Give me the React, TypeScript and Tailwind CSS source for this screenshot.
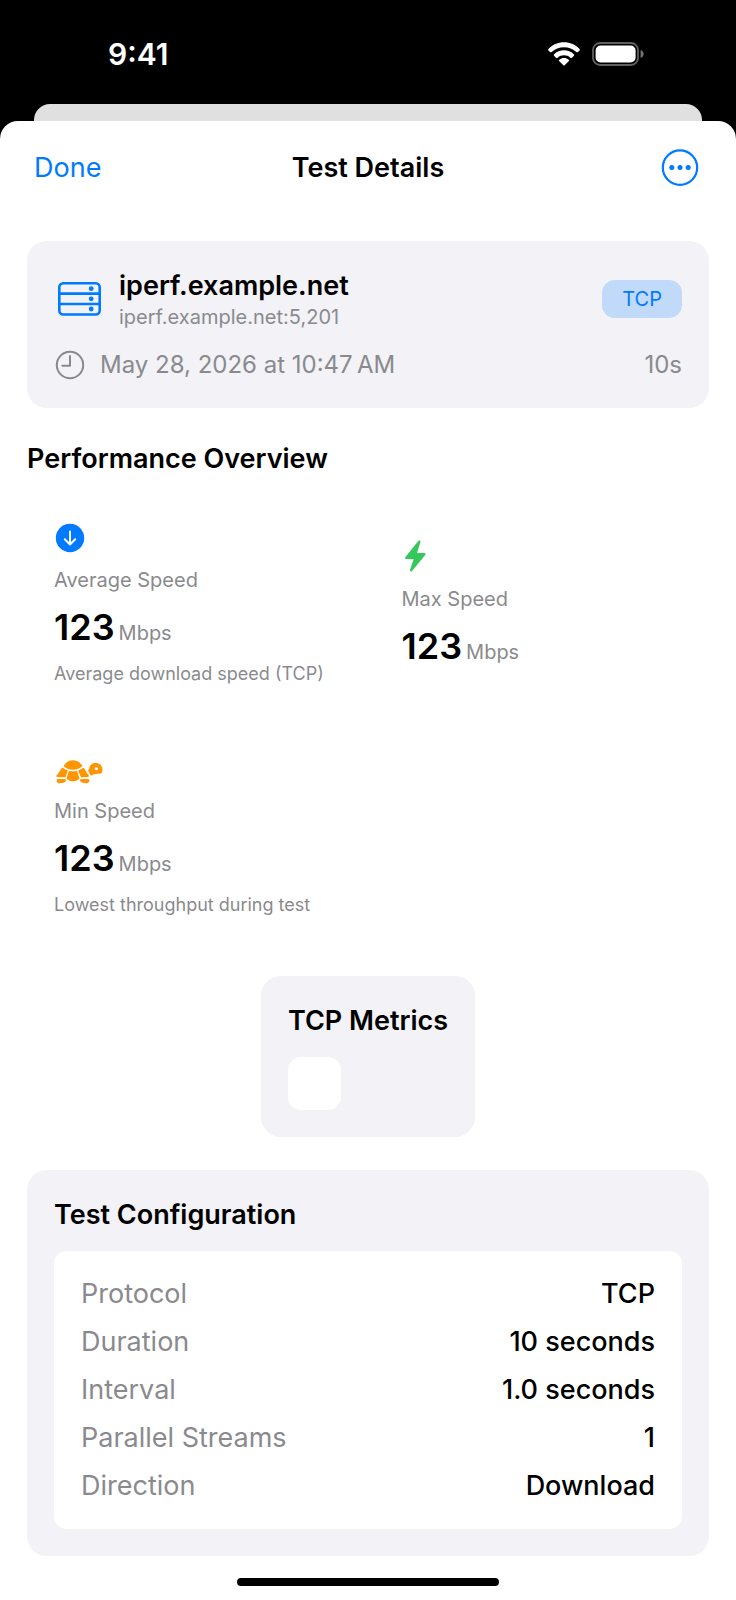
import type { ReactNode } from "react";

interface Metric {
    title: string;
    value: string;
    unit: string;
    description?: string;
    icon: ReactNode;
}

interface ConfigRow {
    label: string;
    value: string;
}

const WifiIcon = () => (
    <svg width="32" height="24" viewBox="0 0 96 72" fill="white" aria-hidden="true">
        <path d="M48 1C66 1 82 8 94 20c2 2 2 4 0 6l-4 4c-1 1-3 1-5 0C75 21 62 16 48 16S21 21 11 30c-2 1-4 1-5 0l-4-4c-2-2-2-4 0-6C14 8 30 1 48 1z" />
        <path d="M48 25c11 0 21 4 29 11 2 2 2 4 0 6l-5 5c-1 1-3 1-5 0-5-5-12-7-19-7s-14 2-19 7c-2 1-4 1-5 0l-5-5c-2-2-2-4 0-6 8-7 18-11 29-11z" />
        <path d="M48 48c5 0 10 2 14 5 2 2 2 3 0 5L50 70c-1 1-3 1-4 0L34 58c-2-2-2-3 0-5 4-3 9-5 14-5z" />
    </svg>
);

const BatteryIcon = () => (
    <svg width="52" height="24" viewBox="0 0 52 24" aria-hidden="true">
        <rect x="1" y="1" width="45" height="22" rx="7" fill="none" stroke="#606060" strokeWidth="1.8" />
        <rect x="3.6" y="3.6" width="40" height="16.8" rx="5" fill="white" />
        <path d="M48.6 8c2 .7 3 2.200 3 4s-1 3.300-3 4z" fill="#757575" />
    </svg>
);

const MoreIcon = () => (
    <svg width="38" height="38" viewBox="0 0 38 38" aria-hidden="true">
        <circle cx="19" cy="18.600" r="17.200" fill="none" stroke="#007aff" strokeWidth="2.200" />
        <circle cx="10.800" cy="18.600" r="2.500" fill="#007aff" />
        <circle cx="19" cy="18.600" r="2.500" fill="#007aff" />
        <circle cx="27.200" cy="18.600" r="2.500" fill="#007aff" />
    </svg>
);

const ServerIcon = () => (
    <svg width="44" height="34" viewBox="0 0 44 34" fill="none" stroke="#007aff" strokeWidth="2.600" aria-hidden="true">
        <rect x="1.300" y="1.300" width="40.400" height="31.200" rx="4" />
        <path d="M2 11.600h39M2 22h39" />
        <g fill="#007aff" stroke="none">
            <circle cx="33.200" cy="6.700" r="2.400" />
            <circle cx="33.200" cy="16.800" r="2.400" />
            <circle cx="33.200" cy="27" r="2.400" />
        </g>
    </svg>
);

const ClockIcon = () => (
    <svg width="32" height="30" viewBox="0 0 32 30" fill="none" stroke="#8a8a8e" strokeWidth="2" strokeLinecap="round" strokeLinejoin="round" aria-hidden="true">
        <circle cx="16" cy="15" r="13.200" />
        <path d="M16 6v9.700H8.300" />
    </svg>
);

const ArrowIcon = () => (
    <svg width="32" height="30" viewBox="0 0 32 30" fill="none" aria-hidden="true">
        <circle cx="16" cy="15" r="14.200" fill="#007aff" />
        <path d="M16 8.500v12.500M10.800 16.300l5.200 5.200 5.200-5.200" stroke="white" strokeWidth="2" strokeLinecap="round" strokeLinejoin="round" />
    </svg>
);

const BoltIcon = () => (
    <svg width="26" height="32" viewBox="0 0 78 96" aria-hidden="true">
        <path d="M49 3c3-3 8-1 6 4L45 39h22c4 0 5 4 2 7L30 93c-3 3-7 1-6-3l11-33H13c-4 0-5-4-2-7z" fill="#34c759" />
    </svg>
);

const TurtleIcon = () => (
    <svg width="50" height="26" viewBox="104 53 150 78" fill="#ff9500" aria-hidden="true">
        <path d="M134 75c7-10 16-15 27-15s20 5 27 15c1 2 0 3-1 4-7 6-16 9-26 9s-19-3-26-9c-2-1-2-2-1-4z" />
        <path d="M130 82c5 3 9 6 14 8 1 0 1 1 1 2l-6 17c-1 2-2 3-4 2l-20-1c-4 0-6-2-3-5 6-6 10-14 15-22 1-2 2-2 3-1z" />
        <path d="M192 82c-5 3-9 6-14 8-1 0-1 1-1 2l7 17c1 2 2 3 4 2l17-1c4 0 4-3 3-6-6-6-9-13-14-21-1-2-1-2-2-1z" />
        <path d="M151 92c7 1 13 1 20 0 2 0 3 1 3 2l6 18c1 2 0 3-1 4-5 4-11 7-18 7s-13-3-18-7c-1-1-2-2-1-4l6-18c0-1 1-2 3-2z" />
        <path d="M116 116c6 0 16-1 22 1 3 1 3 4 1 6-3 4-9 6-17 6-7 0-10-4-10-8 0-3 1-5 4-5z" />
        <path d="M206 116c-6 0-16-1-22 1-3 1-3 4-1 6 3 4 8 6 16 6 7 0 11-4 11-8 0-3-1-5-4-5z" />
        <path fillRule="evenodd" d="M210 84c1-10 8-16 19-16 12 0 20 8 20 18v5c0 6-3 9-9 9-9 0-15 1-23 5-2 1-3 1-4-1l-6-12c-1-2-1-3 0-4 2-1 3-2 3-4zm21-4a5 5 0 1 0 0 10 5 5 0 0 0 0-10z" />
    </svg>
);

const metrics: Metric[] = [
    { title: "Average Speed", value: "123", unit: "Mbps", description: "Average download speed (TCP)", icon: <ArrowIcon /> },
    { title: "Max Speed", value: "123", unit: "Mbps", icon: <BoltIcon /> },
    { title: "Min Speed", value: "123", unit: "Mbps", description: "Lowest throughput during test", icon: <TurtleIcon /> },
];

const config: ConfigRow[] = [
    { label: "Protocol", value: "TCP" },
    { label: "Duration", value: "10 seconds" },
    { label: "Interval", value: "1.0 seconds" },
    { label: "Parallel Streams", value: "1" },
    { label: "Direction", value: "Download" },
];

const StatusBar = () => (
    <div className="flex h-[104px] items-center justify-between pt-1 pr-[92px] pl-[108px] text-white">
        <span className="text-[30px] leading-[34px] font-semibold">9:41</span>
        <div className="flex items-center gap-3">
            <WifiIcon />
            <BatteryIcon />
        </div>
    </div>
);

const MetricCard = ({ metric }: { metric: Metric }) => (
    <div className="flex flex-col items-start px-[27px] text-[#8a8a8e]">
        {metric.icon}
        <h3 className="mt-[13px] text-[20px] leading-7">{metric.title}</h3>
        <p className="mt-[11px] flex items-baseline gap-1 leading-[44px]">
            <span className="text-[36px] font-semibold text-black">{metric.value}</span>
            <span className="text-[20px]">{metric.unit}</span>
        </p>
        {metric.description && <p className="mt-0.5 text-[18px] leading-[34px] whitespace-nowrap">{metric.description}</p>}
    </div>
);

const App = () => {
    return (
        <div className="min-h-screen bg-black font-['Inter','Liberation_Sans',sans-serif]">
            <StatusBar />
            <div className="mx-[34px] h-[17px] rounded-t-2xl bg-[#e0e0e0]" />
            <main className="rounded-t-[18px] bg-white pb-[14px]">
                <header className="grid h-[93px] grid-cols-[1fr_auto_1fr] items-center px-[34px] text-[27px] leading-[41px]">
                    <button type="button" className="justify-self-start text-[#007aff]">Done</button>
                    <h1 className="font-semibold">Test Details</h1>
                    <button type="button" aria-label="More" className="justify-self-end pr-[3px]"><MoreIcon /></button>
                </header>

                <div className="flex flex-col px-[27px] pt-[27px]">
                    <section className="rounded-[20px] bg-[#f2f2f7] p-[27px]">
                        <div className="flex items-center">
                            <div className="ml-1"><ServerIcon /></div>
                            <div className="ml-[17px] grow">
                                <h2 className="text-[27px] leading-9 font-semibold">iperf.example.net</h2>
                                <p className="text-[20px] leading-[26px] text-[#8a8a8e]">iperf.example.net:5,201</p>
                            </div>
                            <span className="rounded-[13px] bg-[#c1daf9] px-5 text-[20px] leading-[38px] text-[#007aff]">TCP</span>
                        </div>
                        <div className="mt-[19px] flex items-center text-[24px] leading-8 text-[#8a8a8e]">
                            <ClockIcon />
                            <time className="ml-[14px] grow">May 28, 2026 at 10:47&#8201;AM</time>
                            <span>10s</span>
                        </div>
                    </section>

                    <section>
                        <h2 className="mt-[34px] text-[27px] leading-[34px] font-semibold">Performance Overview</h2>
                        <div className="mt-[47px] grid grid-cols-2 items-center gap-x-[13px] gap-y-[67px]">
                            {metrics.map((metric) => (
                                <MetricCard key={metric.title} metric={metric} />
                            ))}
                        </div>
                    </section>

                    <section className="mt-[54px] self-center rounded-[20px] bg-[#f2f2f7] p-[27px]">
                        <h2 className="text-[27px] leading-9 font-semibold">TCP Metrics</h2>
                        <div className="mt-[18px] size-[53px] rounded-[13px] bg-white" />
                    </section>

                    <section className="mt-[33px] rounded-[20px] bg-[#f2f2f7] p-[27px]">
                        <h2 className="text-[27px] leading-9 font-semibold">Test Configuration</h2>
                        <dl className="mt-[18px] flex flex-col gap-[14px] rounded-[13px] bg-white px-[27px] py-[26px] text-[27px] leading-[34px]">
                            {config.map((row) => (
                                <div key={row.label} className="flex justify-between">
                                    <dt className="text-[#8a8a8e]">{row.label}</dt>
                                    <dd className="font-medium">{row.value}</dd>
                                </div>
                            ))}
                        </dl>
                    </section>
                </div>

                {/* Home indicator */}
                <div className="mx-auto mt-[22px] h-2 w-[262px] rounded-full bg-black" />
            </main>
        </div>
    );
};

export default App;
